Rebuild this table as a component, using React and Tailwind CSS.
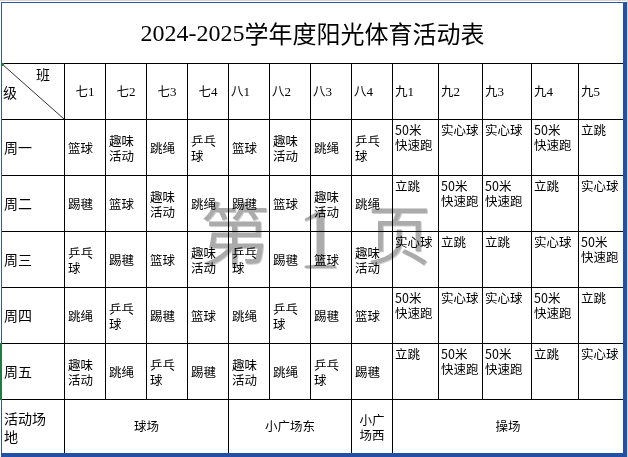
import React from "react";

const CJK = { fontFamily: '"Noto Sans CJK SC", "Liberation Sans", sans-serif' };

const rows = [
  ["周一", ["篮球", "趣味活动", "跳绳", "乒乓球", "篮球", "趣味活动", "跳绳", "乒乓球", "50米快速跑", "实心球", "实心球", "50米快速跑", "立跳"]],
  ["周二", ["踢毽", "篮球", "趣味活动", "跳绳", "踢毽", "篮球", "趣味活动", "跳绳", "立跳", "50米快速跑", "50米快速跑", "立跳", "实心球"]],
  ["周三", ["乒乓球", "踢毽", "篮球", "趣味活动", "乒乓球", "踢毽", "篮球", "趣味活动", "实心球", "立跳", "立跳", "实心球", "50米快速跑"]],
  ["周四", ["跳绳", "乒乓球", "踢毽", "篮球", "跳绳", "乒乓球", "踢毽", "篮球", "50米快速跑", "实心球", "实心球", "50米快速跑", "立跳"]],
  ["周五", ["趣味活动", "跳绳", "乒乓球", "踢毽", "趣味活动", "跳绳", "乒乓球", "踢毽", "立跳", "50米快速跑", "50米快速跑", "立跳", "实心球"]],
];

const breaks = {
  "趣味活动": ["趣味", "活动"],
  "乒乓球": ["乒乓", "球"],
  "50米快速跑": ["50米", "快速跑"],
};

const heads = ["七1", "七2", "七3", "七4", "八1", "八2", "八3", "八4", "九1", "九2", "九3", "九4", "九5"];

function Lines({ text }) {
  const parts = breaks[text] || [text];
  return (
    <div>
      {parts.map((p, i) => (
        <div key={i} className="whitespace-nowrap">{p}</div>
      ))}
    </div>
  );
}

function Head({ t, center }) {
  const [a, b] = [t.slice(0, 1), t.slice(1)];
  return (
    <div className={`bg-white flex items-center text-[12.5px] text-black ${center ? "justify-center" : "justify-start pl-[2px]"}`}>
      <span style={CJK}>{a}</span>
      <span style={{ fontFamily: '"Liberation Serif", serif' }} className="text-[13px]">{b}</span>
    </div>
  );
}

export default function App() {
  return (
    <div className="w-[628px] h-[457px] bg-white relative overflow-hidden" style={CJK}>
      <div className="absolute left-0 top-0 w-full h-px bg-[#d6d6d6]" />
      <div className="absolute right-0 top-0 h-full w-px bg-[#d6d6d6]" />
      <div className="pt-[2px] pl-px">
        <div className="relative w-[626px] border-t border-l border-t-[#3556a8] border-l-[#3556a8] border-r-4 border-b-4 border-r-[#2150a6] border-b-[#2150a6]">
          <div className="grid grid-cols-[62px_40px_40px_40px_40px_40px_40px_40px_40px_45px_43px_48px_46px_44px] grid-rows-[60px_55px_55px_55px_55px_55px_55px_53px] gap-px bg-black text-black">
            {/* title */}
            <div className="col-span-14 bg-white flex items-center justify-center text-[24px] leading-none">
              <span style={{ fontFamily: '"Liberation Serif", serif' }}>2024-2025</span>
              <span style={CJK}>学年度阳光体育活动表</span>
            </div>
            {/* header */}
            <div className="bg-white relative text-[14px]">
              <svg className="absolute inset-0" width="62" height="55" viewBox="0 0 62 55">
                <line x1="0" y1="0" x2="62" y2="55" stroke="#333" strokeWidth="1" />
              </svg>
              <span className="absolute left-[34px] top-[1px] leading-[18px]">班</span>
              <span className="absolute left-[1px] top-[19px] leading-[18px]">级</span>
            </div>
            {heads.map((h, i) => (
              <Head key={h} t={h} center={i < 4} />
            ))}
            {/* body */}
            {rows.map(([day, cells]) => (
              <React.Fragment key={day}>
                <div className="bg-white flex items-center pl-[2px] text-[14px]">{day}</div>
                {cells.map((c, i) =>
                  i < 8 ? (
                    <div key={i} className="bg-white flex items-center pl-[3px] text-[12.5px] leading-[15px]">
                      <Lines text={c} />
                    </div>
                  ) : (
                    <div key={i} className="bg-white pl-[2px] pt-[2px] text-[12.5px] leading-[15px]">
                      <Lines text={c} />
                    </div>
                  )
                )}
              </React.Fragment>
            ))}
            {/* footer */}
            <div className="bg-white flex items-center pl-[2px] text-[14px] leading-[18px]">
              <div>
                <div>活动场</div>
                <div>地</div>
              </div>
            </div>
            <div className="col-span-4 bg-white flex items-center justify-center text-[12.5px]">球场</div>
            <div className="col-span-3 bg-white flex items-center justify-center text-[12.5px]">小广场东</div>
            <div className="bg-white flex items-center justify-center text-[12.5px] leading-[15px] text-center">
              <div>
                <div>小广</div>
                <div>场西</div>
              </div>
            </div>
            <div className="col-span-5 bg-white flex items-center justify-center text-[12.5px]">操场</div>
          </div>
          {/* watermark */}
          <div className="absolute inset-0 pointer-events-none mix-blend-multiply">
            <span className="absolute left-[198px] top-[193px] text-[70px] leading-none text-[#ababab]" style={{ textShadow: "1px 1px 0 #cfcfcf" }}>第</span>
            <span className="absolute left-[295px] top-[191px] text-[88px] leading-none text-[#ababab]" style={{ fontFamily: '"Liberation Serif", serif', textShadow: "1px 1px 0 #cfcfcf" }}>1</span>
            <span className="absolute left-[365px] top-[196px] text-[64px] leading-none text-[#ababab]" style={{ textShadow: "1px 1px 0 #cfcfcf" }}>页</span>
          </div>
          {/* selection marks */}
          <div className="absolute left-[-1px] top-[60px] w-[3px] h-[3px] bg-[#1e7c45]" />
          <div className="absolute left-[-2px] top-[340px] w-[2px] h-[57px] bg-[#1e7c45]" />
        </div>
      </div>
    </div>
  );
}
